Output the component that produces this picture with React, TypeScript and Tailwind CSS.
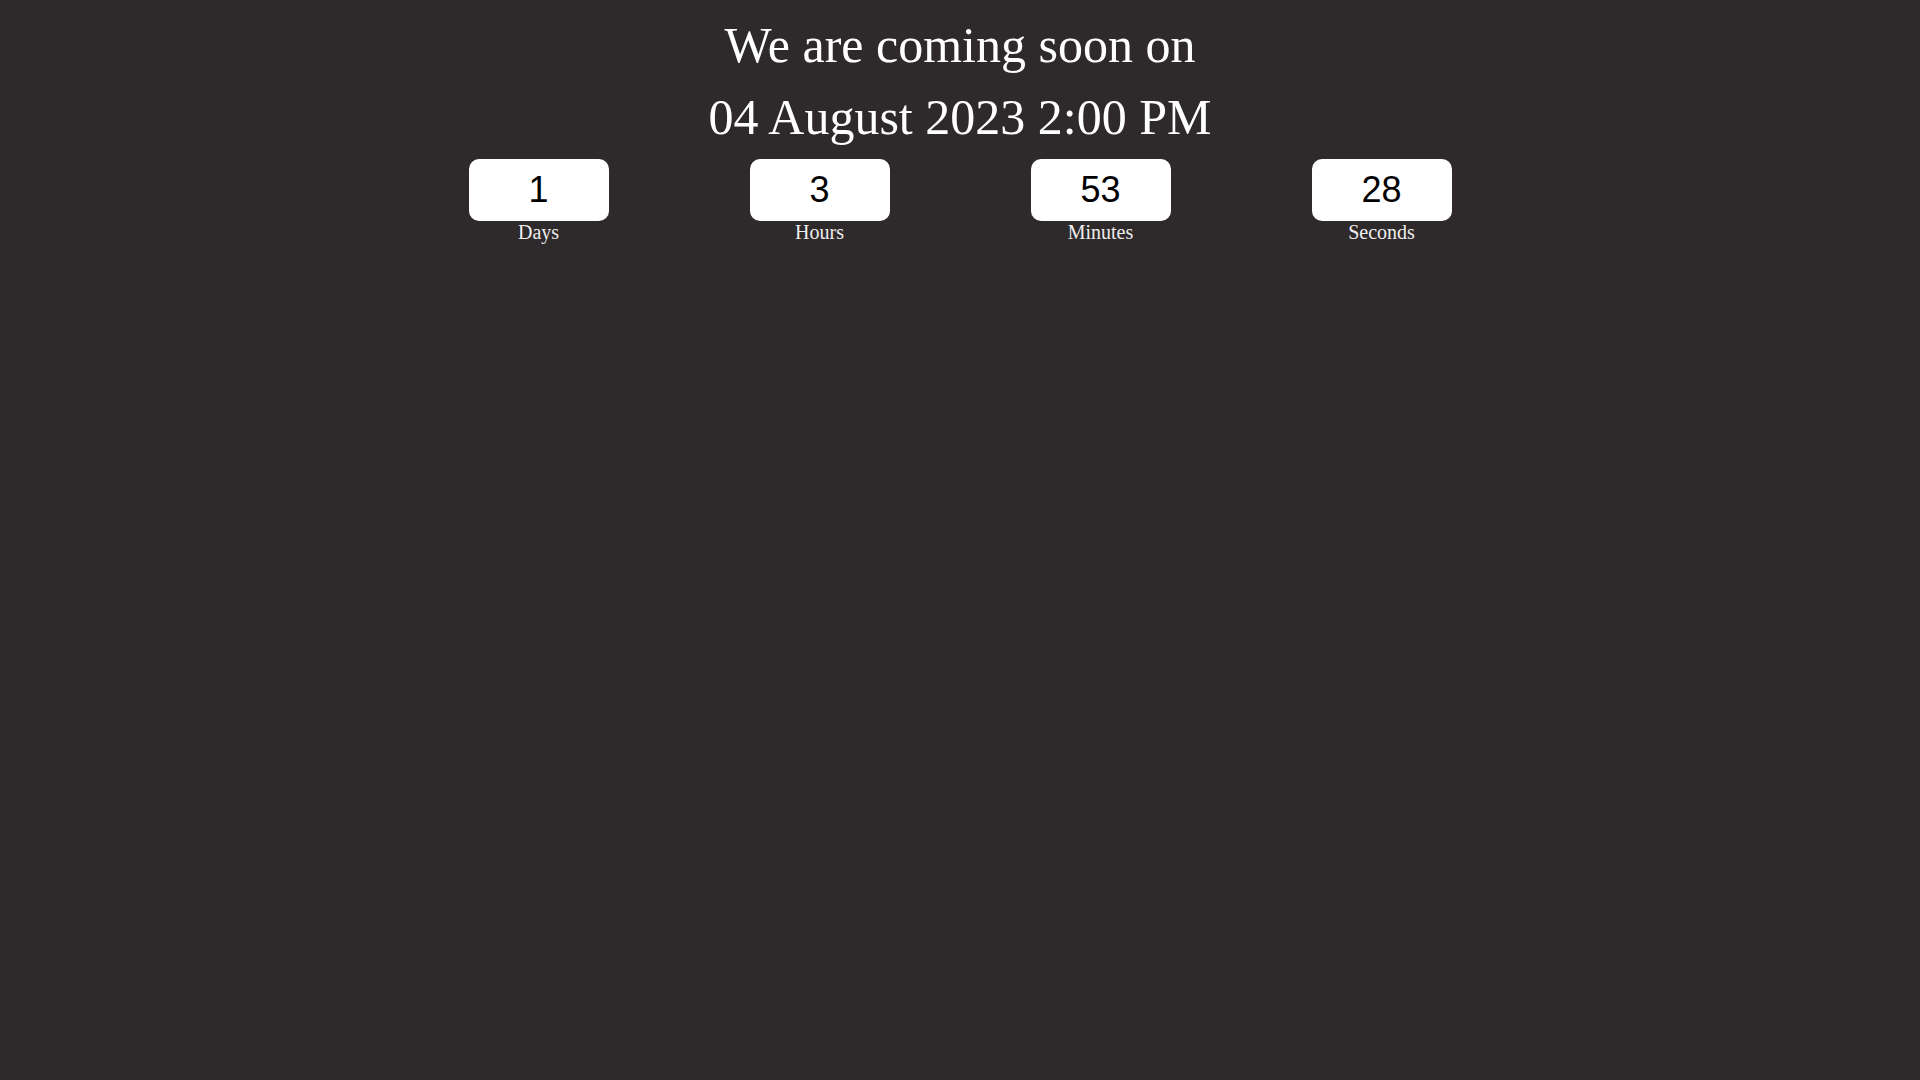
const units = [
  { value: '1', label: 'Days' },
  { value: '3', label: 'Hours' },
  { value: '53', label: 'Minutes' },
  { value: '28', label: 'Seconds' },
];

export default function App() {
  return (
    <div className="min-h-screen w-full bg-[#2e292b] pt-[9px] font-['Liberation_Serif','Times_New_Roman',serif] text-white">
      <div className="text-center text-[50px] leading-[72px]">
        <p>We are coming soon on</p>
        <p>04 August 2023 2:00 PM</p>
      </div>

      <div className="mx-auto mt-[6px] grid w-[1124px] grid-cols-4">
        {units.map((u) => (
          <div key={u.label} className="flex flex-col items-center">
            <div className="flex h-[62px] w-[140px] items-center justify-center rounded-[10px] bg-white font-['Liberation_Sans',Arial,sans-serif] text-[36px] text-black">
              {u.value}
            </div>
            <span className="text-[20px] leading-[23px] text-[#eeeeee]">{u.label}</span>
          </div>
        ))}
      </div>
    </div>
  );
}
